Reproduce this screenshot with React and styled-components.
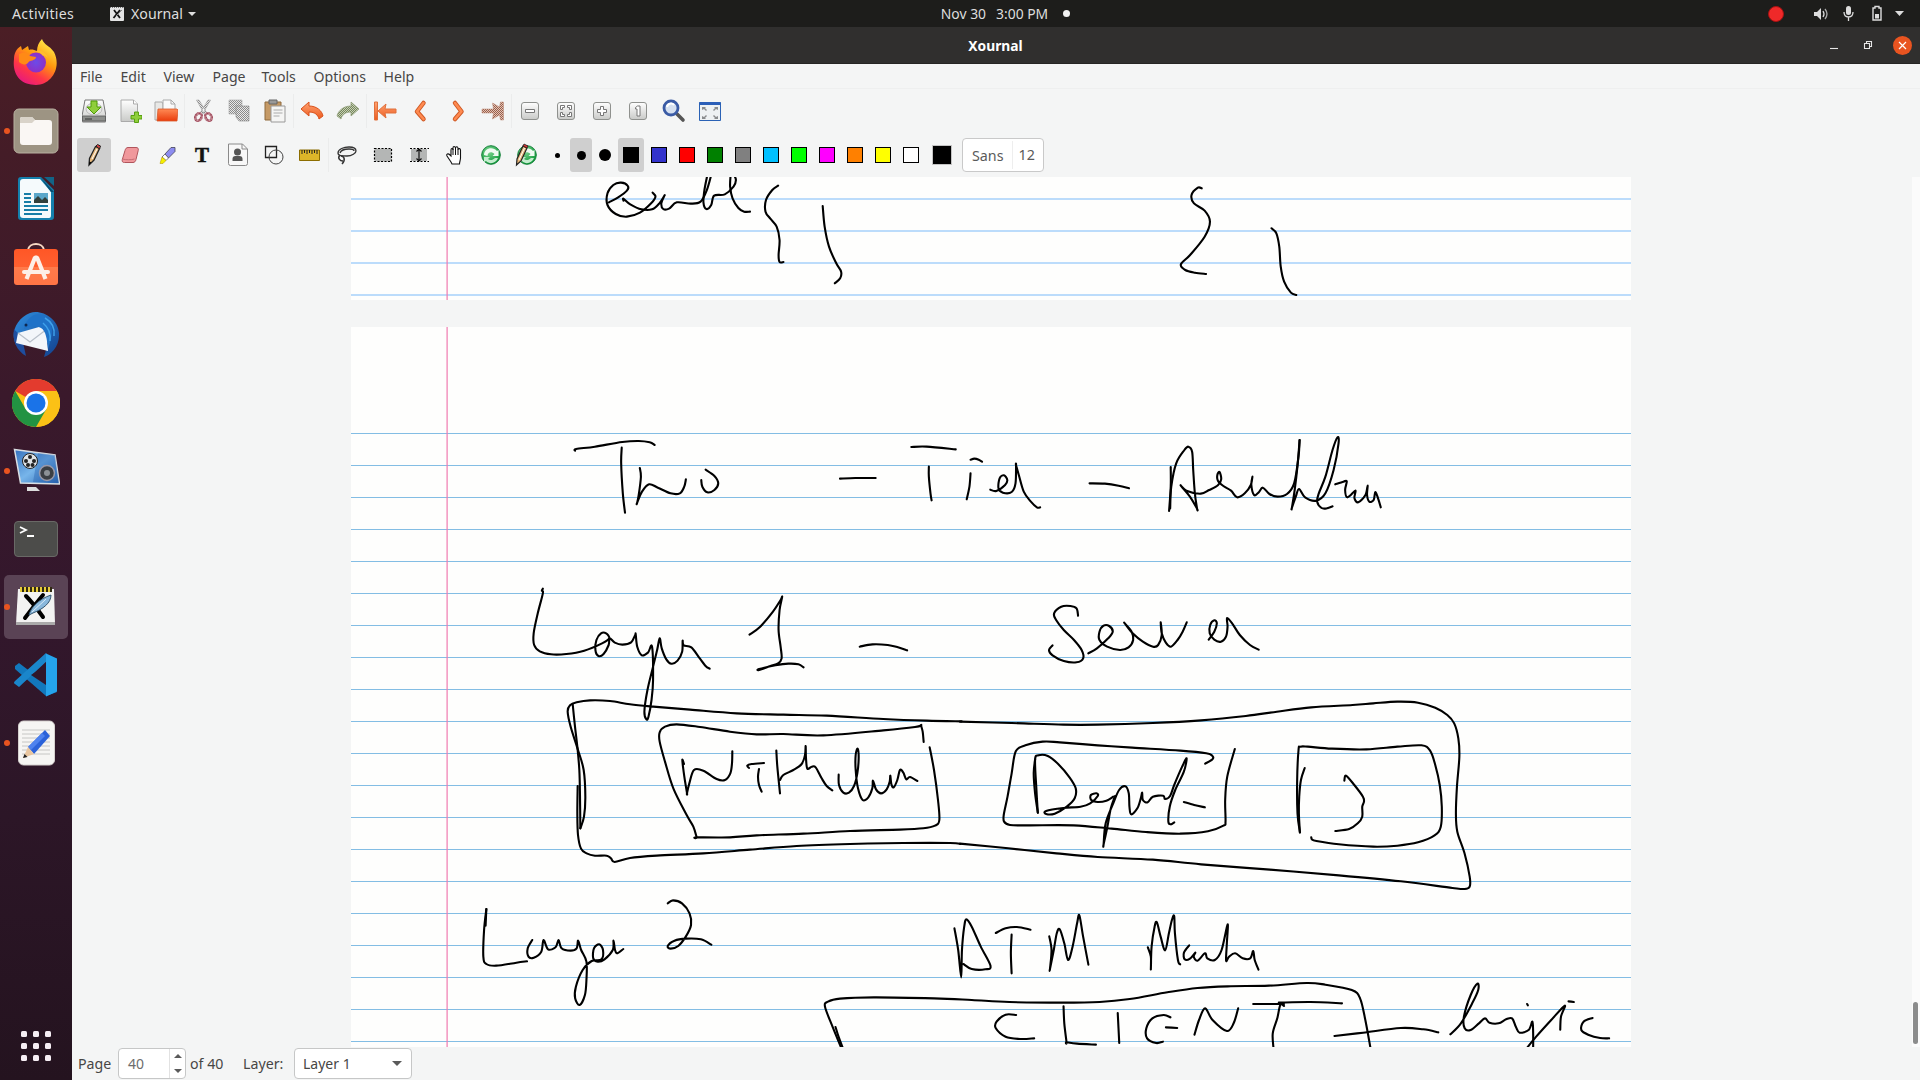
import React from 'react';
import styled, { createGlobalStyle } from 'styled-components';

const Global = createGlobalStyle`
  * { box-sizing: border-box; }
  body { margin: 0; overflow: hidden; background: #f4f5f5; }
  svg { display: block; }
`;

const Screen = styled.div`
  width: 1920px; height: 1080px; display: flex; flex-direction: column; overflow: hidden;
  font-family: "Noto Sans", "Open Sans", sans-serif; font-size: 14px; color: #474645;
`;
const TopBar = styled.header`
  height: 27px; flex: none; background: #1d1d1b; color: #dedede; display: grid;
  grid-template-columns: 1fr auto 1fr; align-items: center; padding: 0 14px 0 12px; line-height: 26px;
`;
const BarGroup = styled.div`
  display: flex; align-items: center; gap: ${p => p.$gap || 0}px; justify-content: ${p => p.$end ? 'flex-end' : 'flex-start'};
  margin-left: ${p => p.$shift || 0}px;
`;
const BarText = styled.span`
  font-size: ${p => p.$size || 13.9}px; width: ${p => p.$w}px; margin-left: ${p => p.$ml || 0}px; white-space: nowrap;
  letter-spacing: ${p => p.$ls || 0}px;
`;
const ClockDot = styled.i`width: 7px; height: 7px; border-radius: 50%; background: #f2f2f2; margin-left: 5px;`;
const Main = styled.div`display: flex; flex: 1; min-height: 0;`;
const Dock = styled.nav`
  width: 72px; flex: none; display: flex; flex-direction: column; padding-top: 2px;
  background: linear-gradient(#4b1e25 0, #441c27 12%, #3a192b 35%, #33172c 55%, #2c1627 75%, #24131f 100%);
`;
const DockItem = styled.div`
  height: 68px; flex: none; display: flex; align-items: center;
`;
const RunDot = styled.i`
  width: 6px; height: 6px; margin-left: 4px; border-radius: 50%; background: ${p => p.$on ? '#e95420' : 'transparent'};
  z-index: 1;
`;
const DockTile = styled.div`
  width: 64px; height: 64px; margin-left: -6px; border-radius: 5px; display: grid; place-items: center;
  background: ${p => p.$active ? '#5a4355' : 'transparent'};
`;
const AppsButton = styled.div`
  margin: auto 21px 19px; display: grid; grid-template-columns: repeat(3, 6px); gap: 6px;
`;
const AppsDot = styled.i`width: 6px; height: 6px; border-radius: 1.5px; background: #f6eef4;`;

const Window = styled.section`flex: 1; min-width: 0; display: flex; flex-direction: column; background: #f4f5f5;`;
const TitleBar = styled.div`
  height: 37px; flex: none; background: #302f2e; border-bottom: 1px solid #262524; color: #fff;
  display: grid; grid-template-columns: 1fr auto 1fr; align-items: center; font-weight: 700; font-size: 13.8px;
  padding: 0 8px 0 7px;
`;
const WinButtons = styled.div`display: flex; justify-content: flex-end; align-items: center; gap: 16px;`;
const CloseButton = styled.span`
  width: 19px; height: 19px; border-radius: 50%; background: #e95420; display: grid; place-items: center;
`;
const MenuBar = styled.div`
  height: 25px; flex: none; display: flex; gap: 16px; align-items: center; padding: 2px 8px 0 8px; border-bottom: 1px solid #eeefef;
`;
const MenuItem = styled.span`width: ${p => p.$w}px; white-space: nowrap; font-size: 14.1px; line-height: 22px;`;
const ToolBar = styled.div`height: 44px; flex: none; display: flex; align-items: center; padding-left: 4px;`;
const Slot = styled.div`
  width: ${p => p.$w || 36}px; height: 34px; flex: none; display: grid; place-items: center;
`;
const Press = styled.span`
  width: ${p => p.$w || 34}px; height: 34px; display: grid; place-items: center; border-radius: 3px;
  background: ${p => p.$on ? '#cfcfcf' : 'transparent'};
`;
const Sep = styled.i`width: 1px; height: 34px; flex: none; background: #ebecec;`;
const PenDot = styled.i`width: ${p => p.$d}px; height: ${p => p.$d}px; border-radius: 50%; background: #000;`;
const Swatch = styled.i`
  width: ${p => p.$s || 16}px; height: ${p => p.$s || 16}px; background: ${p => p.$c};
  border: 1px solid ${p => p.$edge || '#000'};
`;
const FontButton = styled.div`
  width: 82px; height: 34px; margin-left: 3px; border: 1px solid #c9c9c9; border-radius: 4px; background: #fff;
  display: flex; align-items: center; font-size: 14.3px; color: #5a5a5a; padding-left: 9px;
`;
const FontSize = styled.span`border-left: 1px solid #eee; margin-left: 8px; padding-left: 6px; line-height: 28px;`;

const Canvas = styled.div`flex: 1; min-height: 0; display: flex; overflow: hidden;`;
const Pages = styled.div`flex: 1; padding-left: 279px; display: flex; flex-direction: column; gap: 27px;`;
const Paper = styled.article`width: 1280px; height: ${p => p.$h}px; flex: none; background: #fefefd; overflow: hidden;`;
const ScrollTrack = styled.div`width: 8px; background: #fbfbfb; padding: 825px 2px 0 1px;`;
const ScrollThumb = styled.div`height: 42px; border-radius: 3px; background: #8b8c8c;`;

const Status = styled.footer`
  height: 33px; flex: none; display: flex; align-items: flex-start; padding: 1px 0 0 6px; line-height: 31px;
`;
const StatusText = styled.span`
  width: ${p => p.$w}px; margin-left: ${p => p.$ml || 0}px; white-space: nowrap; font-size: 14.2px;
`;
const Spin = styled.div`
  width: 68px; height: 31px; border: 1px solid #c6c7c7; border-radius: 4px; background: #fff; display: flex; color: #6d6d6d;
`;
const SpinValue = styled.span`width: 50px; padding-left: 9px; line-height: 29px;`;
const SpinArrows = styled.span`
  flex: 1; border-left: 1px solid #e2e2e2; display: grid; grid-template-rows: 1fr 1fr; place-items: center;
`;
const Arrow = styled.i`
  width: 0; height: 0; border-left: ${p => p.$s || 4.5}px solid transparent; border-right: ${p => p.$s || 4.5}px solid transparent;
  ${p => p.$up ? 'border-bottom' : 'border-top'}: ${p => p.$s || 4.5}px solid ${p => p.$c || '#5a5a5a'};
`;
const Combo = styled.div`
  width: 118px; height: 31px; border: 1px solid #c6c7c7; border-radius: 4px; background: #fff;
  display: flex; align-items: center; justify-content: space-between; padding: 0 9px 0 8px; line-height: 29px;
`;

/* ---------- handwriting ---------- */
function smooth(points) {
  let d = `M${points[0][0]} ${points[0][1]}`;
  const r = n => Math.round(n * 100) / 100;
  for (let i = 0; i < points.length - 1; i++) {
    const a = points[i - 1] || points[i], b = points[i], c = points[i + 1], e = points[i + 2] || c;
    d += `C${r(b[0] + (c[0] - a[0]) / 6)} ${r(b[1] + (c[1] - a[1]) / 6)} ${r(c[0] - (e[0] - b[0]) / 6)} ${r(c[1] - (e[1] - b[1]) / 6)} ${r(c[0])} ${r(c[1])}`;
  }
  return d;
}
function Ink({ x, y, k, strokes }) {
  return strokes.map((s, i) => (
    <path key={i} d={smooth(s.split(' ').map(t => { const [a, b] = t.split(',').map(Number); return [x + a / k, y + b / 3]; }))}
      fill="none" stroke="#000" strokeWidth="2.1" strokeLinecap="round" strokeLinejoin="round" />
  ));
}

const example = [
  '101,97 120,82 138,62 140,48 126,38 110,45 98,70 98,105 115,132 138,140 165,128 188,100 197,80 191,68',
  '131,92 131,86 145,103 168,118 190,118 205,100 215,78 215,78 209,100 213,117 225,116 241,97 270,101 290,95 303,60 312,15',
  '304,15 298,60 296,98 302,117 312,105 318,77 340,73 358,50 363,30 359,15',
  '352,15 351,50 356,85 368,114 380,125 392,125',
  '450,47 438,60 425,90 424,125 434,146 447,170 453,210 451,255 453,276 461,276',
  '542,108 546,170 555,230 570,280 580,305 578,325 567,340',
  '1324,55 1316,53 1303,75 1308,100 1330,122 1341,155 1330,200 1300,255 1281,283 1290,300 1310,308 1333,312',
  '1468,175 1478,190 1484,230 1487,290 1494,335 1508,368 1519,375',
];
const heading = [
  '64,92 66,87 100,80 150,66 180,63 200,67 209,75', '149,83 148,130 151,220 155,278',
  '182,144 184,170 180,225 177,249 177,249 186,215 199,193 215,203 238,220 255,220 263,200 266,178',
  '294,180 296,200 305,217 318,210 325,190 318,168 302,149',
  '547,176 575,174 612,174', '677,81 705,80 758,88', '709,140 709,170 712,220 714,241',
  '785,160 783,200 778,238', '785,119 792,116 800,119 806,125',
  '821,209 832,213 848,195 852,180 846,166 838,175 836,205 844,218 860,216 867,190 868,136 868,136 873,165 882,215 895,245 906,262 912,262',
  '1002,190 1030,191 1055,197 1074,205', '1150,141 1150,200 1147,273',
  '1149,265 1151,200 1160,130 1175,90 1182,80 1189,95 1191,150 1194,220 1198,266 1198,266 1185,230 1168,196 1180,213 1205,221 1220,210 1236,196 1242,178 1239,156 1235,165 1236,182 1246,198 1260,212 1271,232 1285,220 1296,195 1299,170 1297,195 1302,225 1310,218 1318,203 1330,222 1345,230 1362,222 1375,190 1383,110 1385,60',
  '1385,60 1381,140 1376,210 1371,263 1371,263 1378,230 1384,207 1395,232 1415,242 1432,220 1447,150 1456,70 1454,52 1445,90 1432,170 1420,220 1417,245 1425,264 1435,265 1445,259',
  '1450,193 1465,185 1471,184 1468,210 1472,232 1485,214 1487,214 1485,235 1492,247 1505,225 1509,197 1508,225 1512,245 1520,240 1523,216 1528,235 1533,262',
];
const layerOne = [
  '84,56 82,62 84,70 74,130 66,190 67,225 78,244 100,253 130,252 165,242 200,220 214,205 208,190 198,190 189,210 187,240 193,258 203,252 213,225 215,205 225,218 240,224 257,217 265,195 266,193 269,230 278,256 290,248 298,230 300,330 297,390 291,440 287,448 283,425 289,360 300,290 308,240 313,205 317,235 326,268 336,281 348,272 357,245 358,212 360,226 375,232 390,262 403,288 411,296',
  '489,194 510,170 535,125 550,90 553,81 548,120 546,180 550,230 552,265 545,280 530,288 508,300 508,297 540,286 565,281 585,283 595,292',
  '705,230 730,223 760,225 780,232 798,241',
  '1133,137 1130,115 1118,108 1100,110 1086,130 1090,150 1105,180 1125,210 1140,240 1143,265 1130,277 1105,273 1083,256 1076,240 1083,226',
  '1153,250 1170,235 1192,205 1201,185 1194,168 1183,167 1175,185 1175,210 1190,230 1215,240 1232,232 1241,210 1238,185 1225,161 1225,161 1240,190 1260,215 1280,230 1290,225 1297,195 1295,157 1297,190 1305,218 1315,230 1328,210 1338,185 1346,157',
  '1389,209 1400,185 1405,160 1400,151 1392,165 1391,190 1400,209 1413,215 1423,200 1426,170 1425,144 1435,160 1450,195 1470,225 1487,239',
];
const withdraw = [
  '68,72 75,140 82,200 88,270 90,350 91,445',
  '91,445 102,410 106,350 101,270 84,210 62,140 53,95 60,76 80,67 120,61 180,63 240,73 310,80 420,89 560,100 700,104 830,107 1000,117 1130,122 1235,124',
  '83,318 82,400 84,465 93,506 110,520 135,527 170,527 183,535 194,546 240,534 320,527 460,520 600,509 740,498 900,492 1060,489 1200,489 1232,492',
  '1121,186 1118,155 1113,136 1113,136 1095,141 1000,151 820,166 700,162 620,163 540,155 450,141 380,133 345,140 329,157 329,185 345,245 370,325 410,405 430,440 440,472 440,472 540,472 620,466 760,461 900,453 1050,449 1120,445 1155,437 1168,420 1164,360 1152,270 1139,202',
  '402,252 397,240 403,290 411,339 411,339 418,310 432,270 460,272 500,297 525,300 541,280 546,250 547,214',
  '597,264 592,257 605,252 642,249', '627,267 624,290 627,315 635,335', '679,212 682,260 690,340',
  '690,300 700,285 730,270 755,252 765,225 767,198 768,235 772,266 785,260 797,262 815,295 830,318 847,331',
  '866,284 867,315 880,338 897,338 912,318 922,280 926,235 923,206 917,225 917,270 924,325 938,360 955,352 967,325 969,302 978,328 993,340 1010,328 1019,305 1021,287 1024,312 1031,322 1042,300 1050,270 1060,278 1069,298 1080,291 1102,303',
];
const deposit = [
  '0,95 150,99 300,104 400,104 560,99 700,91 830,78 920,65 1020,52 1140,45 1200,40 1270,35 1330,38 1380,53 1415,75 1435,100 1447,145 1450,200 1443,290 1440,370 1444,425 1465,490 1480,560 1480,590 1465,597 1430,594 1280,574 1100,556 900,539 700,523 560,509 400,501 280,490 140,475 0,461',
  '712,221 733,208 733,198 715,190 640,182 500,173 400,166 290,157 240,155 190,166 162,184 150,250 138,320 127,375 128,395 145,405 200,406 330,406 440,416 540,426 640,431 720,424 765,407 771,395 770,330 776,260 798,177',
  '218,208 214,250 218,310 226,368',
  '226,368 222,300 218,210 228,196 255,198 285,222 318,262 336,295 333,325 310,350 275,371 250,372 250,363 300,354 350,350 378,340 400,318 396,310 380,315 381,330 400,336 425,332 445,320',
  '450,318 438,355 428,410 417,463 417,463 423,400 445,340 462,300 480,289 490,310 492,350 497,373 515,355 525,325 529,308 531,330 545,337 560,320 590,317 595,327 610,318 622,285 645,230 658,205 650,245 625,300 609,350 605,395 612,403 622,397',
  '650,336 680,345 711,352', '1001,234 990,270 985,320 984,370 987,427',
  '987,427 980,370 979,270 983,180 988,170 1010,170 1080,176 1180,178 1270,170 1340,166 1365,182 1380,225 1393,285 1399,350 1396,410 1378,436 1330,457 1270,467 1200,470 1100,463 1035,453 1022,448 1020,442',
  '1116,272 1121,257 1145,285 1170,320 1173,335 1168,350 1168,380 1155,400 1130,417 1090,423',
];
const layerTwo = [
  '35,57 34,107', '35,57 32,120 31,200 35,222 48,227 75,218 89,214',
  '96,150 90,175 91,200 98,203 108,185 111,150 117,178 127,172 131,150 135,175 147,182 155,175 157,152 161,180 168,215 168,270 166,315 159,345 153,325 154,290 163,240 175,213 188,208 190,180 185,163 178,175 177,205 183,215 192,208 203,180 204,152 206,180 209,190 217,177',
  '276,40 283,31 295,40 305,70 307,105 300,140 290,168 280,176 276,168 285,152 300,146 320,148 334,164',
  '657,115 662,180 666,262 667,180 670,110 673,88 680,110 692,170 705,228 698,238 680,237 669,222',
  '712,129 725,115 740,111 758,119', '733,134 732,190 733,250',
  '783,139 786,180 784,236 784,236 789,180 793,130 797,118 803,160 808,210 814,170 820,100 823,76 828,140 835,224',
  '914,172 918,200 918,238 919,170 923,110 926,97 931,140 937,181 942,130 946,90 949,78 950,130 954,210 957,223',
  '969,166 962,188 963,208 970,206 977,188 975,200 980,212 990,190 993,205 1003,210 1012,180 1020,103 1019,160 1018,212 1022,200 1030,190 1040,205 1050,205 1054,183 1056,210 1061,239',
  '509,476 503,440 499,411',
  '507,476 495,410 485,350 489,335 505,326 550,322 630,325 680,330 730,336 800,338 850,336 890,327 940,307 980,294 1020,289 1075,287 1125,279 1150,284 1185,300 1196,325 1203,390 1210,476',
  '739,375 725,374 713,395 712,415 725,440 745,447 763,445', '802,349 803,400 806,457 806,457 820,461 845,464', '874,369 876,459',
  '944,382 935,375 920,385 912,415 913,445 925,459 934,455', '938,412 953,414', '976,434 982,390 990,355 1000,390 1019,423 1028,400 1034,355',
  '1054,342 1095,342', '1088,338 1130,336 1172,340', '1095,348 1090,345 1086,385 1080,430 1081,476',
  '1162,438 1200,428 1250,414 1280,418 1300,427',
  '1316,433 1330,400 1345,340 1353,300 1352,281 1343,315 1334,380 1335,415 1343,420 1354,400 1362,385 1368,398 1380,400 1390,388 1398,385 1403,410 1408,428 1420,420 1425,395 1426,430 1426,476',
  '1417,476 1430,440 1450,390 1468,347 1463,380 1462,419', '1418,342 1419,346', '1473,334 1480,336',
  '1505,384 1493,395 1490,420 1500,435 1515,444 1527,445',
];

function Sheet({ top, height, first, count, color, weight, children }) {
  return (
    <Paper $h={height}>
      <svg width="1280" height={height} viewBox={`351 ${top} 1280 ${height}`}>
        {Array.from({ length: count }, (_, i) => (
          <rect key={i} x="351" y={first + i * 32} width="1280" height={weight} fill={color} />
        ))}
        <rect x="446.5" y={top} width="1.2" height={height} fill="#f07ab0" />
        {children}
      </svg>
    </Paper>
  );
}

/* ---------- toolbar icons, each on a 24px grid ---------- */
const I = ({ children, s = 24 }) => <svg width={s} height={s} viewBox="0 0 24 24" fill="none">{children}</svg>;

const Hidden = styled.svg`position: absolute;`;
const Mesh = ({ id, back, dot }) => (
  <pattern id={id} width="2" height="2" patternUnits="userSpaceOnUse">
    <rect width="2" height="2" fill={back} /><rect width="1" height="1" fill={dot} /><rect x="1" y="1" width="1" height="1" fill={dot} />
  </pattern>
);
const Defs = () => (
  <Hidden width="0" height="0">
    <defs>
      <Mesh id="mesh" back="#e9e9e9" dot="#8a8a8a" />
      <Mesh id="meshG" back="#c6d0b4" dot="#75855c" />
      <Mesh id="meshR" back="#e6c3b5" dot="#96604c" />
      <Mesh id="meshW" back="#d9a9b0" dot="#8e3145" />
      <linearGradient id="or" x1="0" y1="0" x2="0" y2="1"><stop stopColor="#ffa372" /><stop offset="1" stopColor="#ec5a1e" /></linearGradient>
      <linearGradient id="gr" x1="0" y1="0" x2="0" y2="1"><stop stopColor="#fff" /><stop offset="1" stopColor="#c9cac8" /></linearGradient>
      <linearGradient id="ff" x1=".8" y1="0" x2=".2" y2="1"><stop stopColor="#fff44f" /><stop offset=".4" stopColor="#ff980e" /><stop offset=".7" stopColor="#ff3647" /><stop offset="1" stopColor="#e31587" /></linearGradient>
      <linearGradient id="tb" x1="0" y1="0" x2="1" y2="1"><stop stopColor="#2f8fe0" /><stop offset="1" stopColor="#123f8c" /></linearGradient>
      <linearGradient id="kz" x1="0" y1="0" x2="1" y2="1"><stop stopColor="#3470bd" /><stop offset=".5" stopColor="#77b5ea" /><stop offset="1" stopColor="#2a65b0" /></linearGradient>
      <linearGradient id="sw" x1="0" y1="0" x2="0" y2="1"><stop stopColor="#ff5726" /><stop offset=".5" stopColor="#ff6030" /><stop offset=".51" stopColor="#ff7b4b" /><stop offset="1" stopColor="#ff7445" /></linearGradient>
      <linearGradient id="fo" x1="0" y1="0" x2="0" y2="1"><stop stopColor="#ff8a55" /><stop offset="1" stopColor="#ea3c0c" /></linearGradient>
      <radialGradient id="rg" cx=".4" cy=".3" r=".7"><stop stopColor="#7fd692" /><stop offset="1" stopColor="#0e9a38" /></radialGradient>
      <radialGradient id="pu"><stop stopColor="#6b4be8" /><stop offset="1" stopColor="#8e2fc6" /></radialGradient>
    </defs>
  </Hidden>
);

const Save = () => <I><path d="M3 1h18l3 16v5a1 1 0 0 1-1 1H1a1 1 0 0 1-1-1v-5z" fill="url(#gr)" stroke="#777" /><path d="M.5 17h23v5H.5z" fill="#8d8f8c" stroke="#555" strokeWidth=".8" /><path d="M3 20h7" stroke="#333" /><ellipse cx="12" cy="10" rx="8" ry="6" fill="#e8e8e6" stroke="#bbb" /><path d="M9 2h6v6h4l-7 7-7-7h4z" fill="#8fce3b" stroke="#4e9a06" /></I>;
const NewDoc = () => <I><path d="M3 1h12.500l4 4v17.500H3z" fill="url(#gr)" stroke="#aaa" /><path d="M15.500 1v4h4" fill="#fff" stroke="#aaa" /><path d="M16.500 13h4v3.500h3.500v3.500h-3.500v3.500h-4v-3.500h-3.500v-3.500h3.500z" fill="#8fce3b" stroke="#4e9a06" strokeWidth=".9" /></I>;
const OpenDoc = () => <I><path d="M1 3h7l1 2v16H1z" fill="#e8e8e6" stroke="#aaa" /><path d="M9 1h8l4 4v8H9z" fill="#fafafa" stroke="#aaa" /><path d="M17 1v4h4" stroke="#aaa" /><path d="M4 10h19l1 1-1 11H3z" fill="url(#fo)" stroke="#d8592a" strokeWidth=".8" /></I>;
const Cut = () => <I><path d="M5.500 1l2.500 0 8 13-2.500 1.500zM19.500 1l-2.500 0-8 13 2.500 1.500z" fill="url(#mesh)" stroke="#999" strokeWidth=".5" /><ellipse cx="7.500" cy="18" rx="3" ry="4" stroke="url(#meshW)" strokeWidth="2.600" transform="rotate(30 7.500 18)" /><ellipse cx="17.500" cy="18" rx="3" ry="4" stroke="url(#meshW)" strokeWidth="2.600" transform="rotate(-30 17.500 18)" /></I>;
const Copy = () => <I><path d="M2 1h13v14H2z" fill="url(#mesh)" stroke="#aaa" strokeWidth=".6" /><path d="M9 7h13v15H12l-3-4z" fill="url(#mesh)" stroke="#888" strokeWidth=".6" /></I>;
const Paste = () => <I><path d="M2 3h16v18H2z" fill="#c59a66" stroke="#8f6a3d" /><path d="M6 1h8v4H6z" fill="#999" stroke="#666" /><path d="M8 7h14v16H8z" fill="#f5f5f4" stroke="#999" /><path d="M10.500 11h9M10.500 14h9M10.500 17h6" stroke="#aaa" /></I>;
const Undo = () => <I><path d="M1 10L9 3v4c8 0 13 5 14 10l-4 3c-1-4-4-7-10-7v4z" fill="url(#or)" stroke="#d9501a" strokeLinejoin="round" /></I>;
const Redo = () => <I><path d="M23 10L15 3v4C7 7 2 12 1 17l4 3c1-4 4-7 10-7v4z" fill="url(#meshG)" stroke="#8a9a72" strokeWidth=".7" strokeLinejoin="round" /></I>;
const First = () => <I><path d="M1.500 3h3v18h-3zM5 12l8-7-1 5h11v4H12l1 5z" fill="url(#or)" stroke="#e0703c" strokeLinejoin="round" /></I>;
const Last = () => <I><path d="M22.500 3h-3l-1 5-7-4 1 6H1v4h11.500l-1 6 7-4 1 5h3z" fill="url(#meshR)" stroke="#b98570" strokeWidth=".5" /></I>;
const Chev = ({ d }) => <I><path d={d} stroke="#cf5a26" strokeWidth="4.500" strokeLinejoin="round" strokeLinecap="round" /><path d={d} stroke="#ff8a50" strokeWidth="2.600" strokeLinejoin="round" strokeLinecap="round" /></I>;
const Prev = () => <Chev d="M14.500 4L8 12.500l6.500 7.500" />;
const Next = () => <Chev d="M10 4l6.500 8.500L10 20" />;
const Key = ({ children }) => <I><rect x="3.500" y="3.500" width="17" height="17" rx="2.500" fill="url(#gr)" stroke="#8f918e" /><g fill="#fff" stroke="#777" strokeWidth="1">{children}</g></I>;
const Lens = () => <I><path d="M15 15l6 6" stroke="#555" strokeWidth="3.600" strokeLinecap="round" /><circle cx="9" cy="9" r="7" fill="#d5e0f0" stroke="#3a5ba5" strokeWidth="2.800" /><path d="M5 8a4 4 0 0 1 7-2" stroke="#fff" strokeWidth="2" /></I>;
const Full = () => <I><path d="M1.500 3.500h21v18h-21z" fill="#eef1f3" stroke="#2b62b5" /><path d="M1.500 3h21v3h-21z" fill="#2b5fb8" /><path d="M4 8h4l-1 1 2 2-1 1-2-2-2 1zM20 8h-4l1 1-2 2 1 1 2-2 2 1zM4 20h4l-1-1 2-2-1-1-2 2-2-1zM20 20h-4l1-1-2-2 1-1 2 2 2-1z" fill="#8a8c8e" /></I>;

const Pencil = () => <I><path d="M7 22L7.500 15.500 13.500 3.500l4 2L12 17z" fill="#e8b87a" stroke="#222" strokeWidth="1.300" /><path d="M14 3l1.500-1.500 3 1.500-1 3z" fill="#d44" stroke="#222" /><path d="M10 16l5-10" stroke="#fff" /><path d="M7 22l.3-3.500 2 .8z" fill="#000" /></I>;
const Eraser = () => <I><path d="M10 4.500h8c2 0 2.700 1 2.200 3L18 16.500c-.5 2-1.500 3-3 3H6.500c-2 0-2.700-1-2.200-3L7 7.500c.5-2 1.500-3 3-3z" fill="#f0989c" stroke="#b0555c" /><path d="M4.500 16c3 1 9 1 12 0" stroke="#c76e74" /></I>;
const Marker = () => <I><path d="M11 11l6-6.500h4v4l-6.500 6.500z" fill="#8c8cf0" stroke="#445" strokeWidth=".8" /><path d="M11 11l3.500 4-2.500 2.500-4-3.500z" fill="#fff" stroke="#445" strokeWidth=".7" /><path d="M8 14l4 3.500-3 3H6z" fill="#f5f000" stroke="#a80" strokeWidth=".5" /></I>;
const Bust = () => <I><path d="M2.500 1h14l5 5v14.500a2 2 0 0 1-2 2h-15a2 2 0 0 1-2-2z" fill="#f8f8f8" stroke="#8a8a8a" /><path d="M16 1v5h5" stroke="#8a8a8a" /><circle cx="11.500" cy="9" r="3.500" fill="#555" /><path d="M6.500 18v-2q0-3 3-3h4q3 0 3 3v2z" fill="#555" /></I>;
const Shapes = () => <I><path d="M3.500 3.500h11v11h-11z" stroke="#222" strokeWidth="1.300" /><circle cx="14" cy="14" r="7" stroke="#444" /></I>;
const Ruler = () => <I><path d="M1.500 7h20v10.500h-20z" fill="#dcb529" stroke="#8c6d00" /><path d="M4 7v4M6.500 7v3M9 7v4M11.500 7v3M14 7v4M16.500 7v3M19 7v4" stroke="#222" /></I>;
const Lasso = () => <I><path d="M3 10c0-4 6-6 11-6s7 2 7 4-4 5-9 5-9 0-9-3zM5 10c1-3 6-4 9-4s5 1 5 2" stroke="#333" strokeWidth="1.300" /><path d="M5 12c-3 3 0 6 3 6M6 13c3 0 5 4 1 8" stroke="#333" strokeWidth="1.500" /></I>;
const Region = () => <I><path d="M3.500 5.500h17v13h-17z" fill="#b4b6b5" stroke="#000" strokeWidth="1.200" strokeDasharray="2 1.500" /></I>;
const VSpace = () => <I><path d="M4 6h16v12H4z" fill="#b4b6b5" /><path d="M3 5.500h19M3 18.500h19" stroke="#000" strokeDasharray="2 1.500" /><path d="M12 6v12M9.500 8.500L12 6l2.500 2.500M9.500 15.500L12 18l2.500-2.500" stroke="#111" strokeWidth="1.200" /></I>;
const Hand = () => <I><path d="M8 19l-4-6c-1-2 1-3 3-1l1 1V7c0-2 2-2 2 0V5c0-2 2-2 2.500 0 .5-2 2.500-1.500 2.500.500v1c.500-1.500 2.500-1 2.500.500V15c0 2-1 4-1 6H9z" fill="#fff" stroke="#111" strokeWidth="1.100" /><path d="M10 6v6M12.500 5v7M15 6v6" stroke="#111" /></I>;
const Recycle = () => <><circle cx="12" cy="12" r="9.300" fill="url(#rg)" stroke="#14803a" /><path d="M5 12c0-7 9-9 13-4l1.500-1v6h-6l2-2c-3-3-7-2-7 2z" fill="#effaf1" /><path d="M5 14h6l-2 2c2 2 5 1 7-1h3c-2 5-8 7-12 3l-2 1z" fill="#c4ecce" /></>;

const fileTools = [
  [Save, NewDoc, OpenDoc], [Cut, Copy, Paste], [Undo, Redo], [First, Prev, Next, Last],
  [
    () => <Key><path d="M7.500 10.500h9v3h-9z" /></Key>,
    () => <Key><path d="M6.500 6.500h4v2h-2v2h-2zM17.500 6.500h-4v2h2v2h2zM6.500 17.500h4v-2h-2v-2h-2zM17.500 17.500h-4v-2h2v-2h2z" /></Key>,
    () => <Key><path d="M10.500 7.500h3v3h3v3h-3v3h-3v-3h-3v-3h3z" /></Key>,
    () => <Key><path d="M9.500 8.500l2-1.500h2.500v10h-3v-7h-1.500z" /></Key>,
    Lens, Full,
  ],
];
const swatches = ['#000000', '#3333cc', '#ff0000', '#008000', '#808080', '#00c0ff', '#00ff00', '#ff00ff', '#ff8000', '#ffff00', '#ffffff'];

const Glyph = styled.b`font: 700 21px/24px "Liberation Serif", serif; color: #111; -webkit-text-stroke: .5px #111;`;

function Toolbars() {
  return (
    <>
      <ToolBar>
        {fileTools.map((g, i) => (
          <React.Fragment key={i}>
            {i > 0 && <Sep />}
            {g.map((T, j) => <Slot key={j}><T /></Slot>)}
          </React.Fragment>
        ))}
      </ToolBar>
      <ToolBar>
        <Slot><Press $on><Pencil /></Press></Slot>
        <Slot><Eraser /></Slot><Slot><Marker /></Slot><Slot><Glyph>T</Glyph></Slot>
        <Slot><Bust /></Slot><Slot><Shapes /></Slot><Slot><Ruler /></Slot>
        <Sep />
        <Slot><Lasso /></Slot><Slot><Region /></Slot><Slot><VSpace /></Slot><Slot><Hand /></Slot>
        <Slot><I><Recycle /></I></Slot>
        <Slot><I><Recycle /><path d="M1.500 22L2 16 8 3l4 2-6 13z" fill="#e8b87a" stroke="#222" strokeWidth="1.200" /><path d="M8 3l1-2 4 2-1 2z" fill="#d33" stroke="#222" strokeWidth=".8" /><path d="M4 17l5.500-12" stroke="#fff" /></I></Slot>
        {[5, 9, 12].map((d, i) => <Slot key={d} $w={24}><Press $w={22} $on={i === 1}><PenDot $d={d} /></Press></Slot>)}
        {swatches.map((c, i) => <Slot key={c} $w={28}><Press $w={26} $on={i === 0}><Swatch $c={c} /></Press></Slot>)}
        <Slot $w={34}><Swatch $c="#000" $s={20} $edge="#c4c4c4" /></Slot>
        <FontButton>Sans<FontSize>12</FontSize></FontButton>
      </ToolBar>
    </>
  );
}

/* ---------- dock icons on a 48px grid ---------- */
const D = ({ children }) => <svg width="48" height="48" viewBox="0 0 48 48" fill="none">{children}</svg>;
const Firefox = () => <D><path d="M2 20c0-5 2-10 7-13l1 4 6-4 1 4c3-1 5 0 8 1 0-5 2-9 5-12 2 6 7 6 12 13 8 16-3 33-18 33S0 36 2 20z" fill="url(#ff)" /><circle cx="24" cy="23.500" r="10" fill="url(#pu)" /><path d="M7 15c5-2 9-2 11 2l6 1c0 4-7 3-8 6-2 2-6 2-9-1z" fill="#ff8a16" /><path d="M24 12c5-2 10 2 12 7-2-2-4-3-5-2-2-3-4-4-7-5z" fill="#ffbd2f" /></D>;
const Files = () => <D><rect x="2" y="2" width="44" height="44" rx="5" fill="#9d9483" stroke="#b8b0a0" /><path d="M8 12q0-2 2-2h10l3 3h14q3 0 3 3v19q0 3-3 3H11q-3 0-3-3z" fill="#faf7f4" /><path d="M8 12q0-2 2-2h10l3 3-3 3H8z" fill="#d9d3c9" /></D>;
const Writer = () => <D><path d="M9 2h20l13 13v27q0 3-3 3H9q-3 0-3-3V5q0-3 3-3z" fill="#1480ad" /><path d="M11 4h17l11 13v23q0 3-2 3H11q-3 0-3-3V7q0-3 3-3z" fill="#f5fafc" /><path d="M32 2h10v9z" fill="#126487" /><path d="M28 2l14 15-3 0z" fill="#084d70" /><path d="M12 19h7M12 23h7M12 27h7M12 31h24M12 35h24M12 39h18" stroke="#177da7" strokeWidth="1.800" /><path d="M22 18h14v10H22z" fill="#5ba7ca" /><path d="M22 28v-3l4-4 4 4 3-3 3 3v3z" fill="#33403c" /></D>;
const Software = () => <D><path d="M16 7c1-8 15-8 16 0" stroke="#f6d7c3" strokeWidth="2" /><rect x="2" y="6" width="44" height="36" rx="3" fill="url(#sw)" /><path d="M14.500 36L23 14.500h2L33.500 36" stroke="#fdefe8" strokeWidth="4.200" strokeLinejoin="bevel" /><path d="M12 29h24" stroke="#fdefe8" strokeWidth="4" strokeLinecap="round" /></D>;
const Thunderbird = () => <D><path d="M18 2c12-4 28 6 29 20 1 13-8 22-15 24l4-14L4 34C-2 22 4 8 18 2z" fill="url(#tb)" /><path d="M2 18c-2 12 3 22 12 27l-4-18z" fill="#1e4e9f" /><path d="M6 22l28-8 2 26-32-8z" fill="#f3f6fa" /><path d="M6 22l12 9 17-13" stroke="#b9c0ca" strokeWidth="1.300" /><path d="M12 18c2-10 10-17 18-14 12 4 12 18 6 34-1-10-2-18-7-21-6-3-12-1-17 1z" fill="#1f72c8" /><path d="M33 7c7 4 10 10 9 18M31 12c6 5 8 10 7 18" stroke="#3fa2eb" strokeWidth="1.500" /><circle cx="14" cy="14" r="1.500" fill="#0d274f" /></D>;
const Chrome = () => <D><circle cx="24" cy="24" r="24" fill="#fbc116" /><path d="M24 24L3.200 12A24 24 0 0 1 44.800 12z" fill="#e33b2e" /><path d="M24 12h20.800A24 24 0 0 1 24 48l10.400-18z" fill="#fbc116" /><path d="M3.200 12A24 24 0 0 0 24 48l10.400-18H13.600z" fill="#229342" /><circle cx="24" cy="24" r="12" fill="#fff" /><circle cx="24" cy="24" r="9.500" fill="#1a73e8" /></D>;
const Kazam = () => <D><path d="M2.500 2.500L43 8l4.500 29-39-1z" fill="url(#kz)" stroke="#d9dee3" strokeWidth="1.500" /><path d="M26 6l17 2 4 28-26-1z" fill="#1d56a5" opacity=".35" /><circle cx="18" cy="14" r="7.500" fill="#dfe3e6" stroke="#222" /><g fill="#222"><circle cx="18" cy="10" r="2" /><circle cx="14" cy="14" r="2" /><circle cx="22" cy="14" r="2" /><circle cx="16" cy="18" r="2" /><circle cx="20.500" cy="18" r="2" /></g><circle cx="35" cy="26" r="7.500" fill="#3b3f44" stroke="#99a" strokeWidth="1.500" /><circle cx="35" cy="26" r="3" fill="#8c9196" /><path d="M15 40h9l4 4H15z" fill="#dcdcdc" /></D>;
const Term = () => <D><rect x="2.500" y="6.500" width="43" height="35" rx="3.500" fill="#4c4c4a" stroke="#696966" /><path d="M8 12l6 3-6 3M15 21h7" stroke="#fff" strokeWidth="1.800" /></D>;
const Xournal = () => <D><path d="M6 6h36l1 35H4z" fill="#f3f3f2" /><path d="M4 39h39v3H4z" fill="#aaa" /><path d="M8 4h32v5H8z" fill="#302a12" /><path d="M9 4v5M13 4v5M17 4v5M21 4v5M25 4v5M29 4v5M33 4v5M37 4v5" stroke="#e8cc3b" strokeWidth="2" /><path d="M14 13c4 4 12 14 17 21M31 12c-6 7-12 15-18 23" stroke="#000" strokeWidth="4" strokeLinecap="round" /><path d="M17 32c2-8 10-16 22-20 0 8-8 14-18 18z" fill="#8ab8dc" stroke="#34566f" /><path d="M20 29l14-13" stroke="#dcedf8" /></D>;
const Code = () => <D><path d="M3 15l4-3 38 29-11 4L3 18z" fill="#1278bd" /><path d="M3 33l4 3L37 8l-3-6L3 30q-2 2 0 3z" fill="#1a86cb" /><path d="M34 2.500l11 5v33l-11 5z" fill="#25a4ec" /><path d="M34 14v20L19 24z" fill="#30172b" /></D>;
const Notes = () => <D><rect x="6.500" y="2" width="36" height="44" rx="5" fill="#f6f5f3" stroke="#d5d0ce" /><path d="M10 11h28M10 15h28M10 19h28M10 23h28M10 27h28M10 31h28M10 35h28" stroke="#c6c6c4" /><path d="M33 11l5 6-16 18-6-7z" fill="#2b62d9" /><path d="M30 14l3 3-14 14-3-3z" fill="#4d82ef" /><path d="M16 28l6 7-11 4z" fill="#e9c6a0" /><path d="M11 39l1.500-4 3 3z" fill="#222" /></D>;

const dock = [[Firefox], [Files, 1], [Writer], [Software], [Thunderbird], [Chrome], [Kazam, 1], [Term], [Xournal, 1, 1], [Code], [Notes, 1]];

export default function App() {
  return (
    <Screen>
      <Global />
      <Defs />
      <TopBar>
        <BarGroup>
          <BarText $w={98} $size={14.1} $ls={0.35}>Activities</BarText>
          <svg width="14" height="14" viewBox="0 0 14 14"><rect width="14" height="14" rx="1" fill="#e4e4e4" /><path d="M0 .5h14" stroke="#777" strokeDasharray="1 1" /><path d="M4 3l6 8M10 3l-6.500 8" stroke="#111" strokeWidth="1.800" /><path d="M6 9l6-6" stroke="#888" /></svg>
          <BarText $w={57} $ml={7} $size={14.2}>Xournal</BarText>
          <Arrow $s={4.5} $c="#dedede" />
        </BarGroup>
        <BarGroup $gap={10} $shift={93}>
          <BarText>Nov 30</BarText><BarText>3:00 PM</BarText><ClockDot />
        </BarGroup>
        <BarGroup $end>
          <svg width="140" height="20" viewBox="0 0 140 20" fill="none">
            <circle cx="10" cy="10" r="7.500" fill="#ef2929" stroke="#a81212" />
            <path d="M48 8h3l4-4v12l-4-4h-3z" fill="#ddd" /><path d="M57 7q2 3 0 6" stroke="#ddd" strokeWidth="1.300" /><path d="M59 5q4 5 0 10" stroke="#aaa" strokeWidth="1.300" />
            <rect x="80" y="2" width="5" height="9" rx="2.500" fill="#ddd" /><path d="M78 8q0 5 4.500 5T87 8M82.500 13v4" stroke="#ddd" strokeWidth="1.300" />
            <path d="M107 4h2V2.500h4V4h2v12h-8z" stroke="#ddd" strokeWidth="1.400" /><path d="M109 10h4v4.500h-4z" fill="#ddd" />
            <path d="M129 7h9l-4.500 5z" fill="#ddd" />
          </svg>
        </BarGroup>
      </TopBar>
      <Main>
        <Dock>
          {dock.map(([Icon, on, active], i) => (
            <DockItem key={i}><RunDot $on={on} /><DockTile $active={active}><Icon /></DockTile></DockItem>
          ))}
          <AppsButton>{Array.from({ length: 9 }, (_, i) => <AppsDot key={i} />)}</AppsButton>
        </Dock>
        <Window>
          <TitleBar>
            <span />
            <span>Xournal</span>
            <WinButtons>
              <svg width="50" height="14" viewBox="0 0 50 14" fill="none" stroke="#e6e6e6" strokeWidth="1.100"><path d="M3 10.500h8" /><path d="M37.500 5.500h5v5h-5zM39.500 5V3.500h5v5H43" /></svg>
              <CloseButton><svg width="9" height="9" viewBox="0 0 9 9"><path d="M1 1l7 7M8 1L1 8" stroke="#fff" strokeWidth="1.200" /></svg></CloseButton>
            </WinButtons>
          </TitleBar>
          <MenuBar>
            {[['File', 24.5], ['Edit', 27], ['View', 33], ['Page', 33], ['Tools', 36], ['Options', 54], ['Help', 31]].map(([t, w]) => <MenuItem key={t} $w={w}>{t}</MenuItem>)}
          </MenuBar>
          <Toolbars />
          <Canvas>
            <Pages>
              <Sheet top={177} height={123} first={198} count={4} color="#bcdcfb" weight={2}>
                <Ink x={560} y={170} k={2.0632} strokes={example} />
              </Sheet>
              <Sheet top={327} height={720} first={433} count={20} color="#83bde4" weight={1}>
                <Ink x={540} y={420} k={1.8233} strokes={heading} />
                <Ink x={500} y={570} k={1.96} strokes={layerOne} />
                <Ink x={550} y={680} k={3} strokes={withdraw} />
                <Ink x={960} y={690} k={2.9037} strokes={deposit} />
                <Ink x={460} y={890} k={1.3288} strokes={layerTwo} />
              </Sheet>
            </Pages>
            <ScrollTrack><ScrollThumb /></ScrollTrack>
          </Canvas>
          <Status>
            <StatusText $w={40}>Page</StatusText>
            <Spin><SpinValue>40</SpinValue><SpinArrows><Arrow $up /><Arrow /></SpinArrows></Spin>
            <StatusText $w={53} $ml={4}>of 40</StatusText>
            <StatusText $w={51}>Layer:</StatusText>
            <Combo>Layer 1<Arrow $s={5} /></Combo>
          </Status>
        </Window>
      </Main>
    </Screen>
  );
}
